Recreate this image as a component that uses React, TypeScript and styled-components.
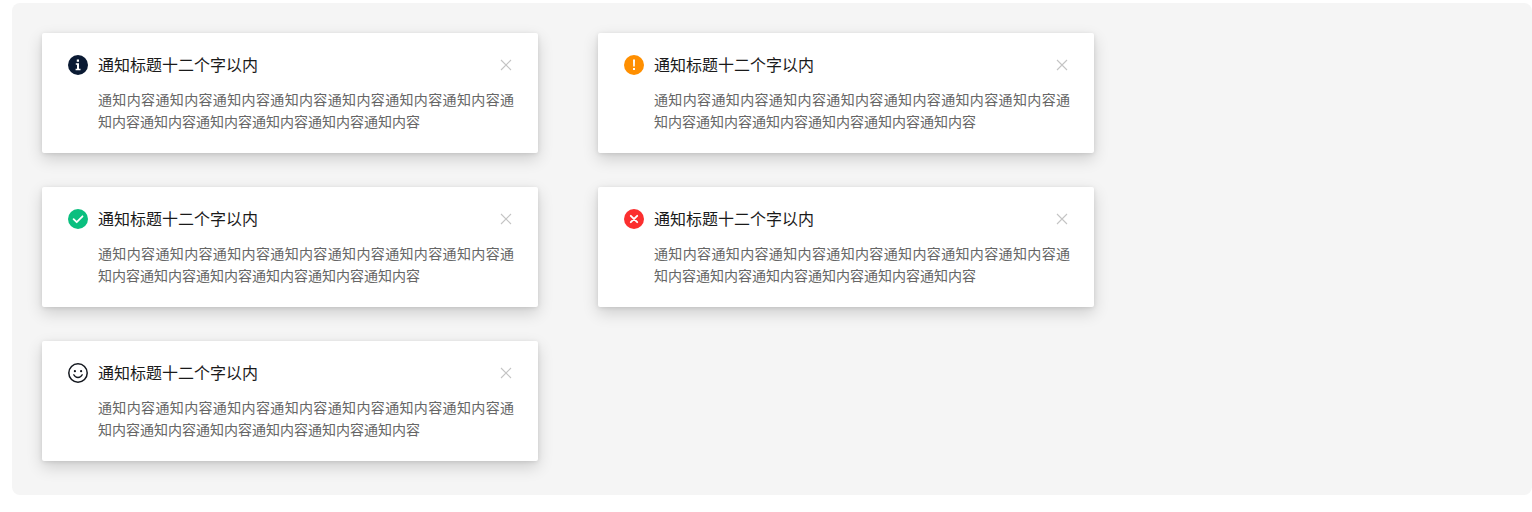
import React from "react";
import styled, { createGlobalStyle } from "styled-components";

const Global = createGlobalStyle`
  html, body { margin: 0; padding: 0; background: #fff; }
  body { font-family: "Noto Sans CJK SC", "Liberation Sans", sans-serif; }
`;

const Page = styled.div`
  padding: 3px 0 17px 12px;
  width: 1532px;
  height: 512px;
  box-sizing: border-box;
`;

const Panel = styled.div`
  height: 492px;
  box-sizing: border-box;
  background: #f5f5f5;
  border-radius: 8px;
  padding: 30px;
  display: grid;
  grid-template-columns: 496px 496px;
  grid-auto-rows: 120px;
  column-gap: 60px;
  row-gap: 34px;
`;

const Card = styled.div`
  background: #fff;
  border-radius: 2px;
  box-shadow: 0 6px 16px rgba(0, 0, 0, 0.16), 0 1px 4px rgba(0, 0, 0, 0.1);
  padding: 21px 24px 0 26px;
  box-sizing: border-box;
  display: grid;
  grid-template-columns: 20px 1fr 12px;
  column-gap: 10px;
  grid-template-rows: 22px auto;
  row-gap: 12px;
  align-items: center;
  align-content: start;
`;

const IconSlot = styled.svg`
  display: block;
  width: 20px;
  height: 20px;
`;

const Title = styled.div`
  font-size: 16px;
  line-height: 22px;
  padding-bottom: 2px;
  color: #1a1a1a;
  white-space: nowrap;
`;

const Close = styled.svg`
  display: block;
  width: 12px;
  height: 12px;
  justify-self: end;
  margin-right: 2px;
`;

const Body = styled.div`
  grid-column: 2 / 4;
  font-size: 14px;
  line-height: 22px;
  color: #666;
  width: 416px;
  text-align: justify;
`;

const Info = () => (
  <IconSlot viewBox="0 0 20 20">
    <circle cx="10" cy="10" r="10" fill="#0a1a33" />
    <path
      d="M8.8 4.6h2.2v2.2H8.8zM7.8 8.2h3.2v5.6h1.5v1.5H7.6v-1.5h1.4V9.7H7.8z"
      fill="#fff"
    />
  </IconSlot>
);

const Warn = () => (
  <IconSlot viewBox="0 0 20 20">
    <circle cx="10" cy="10" r="10" fill="#ff8f00" />
    <path d="M9 4.6h2l-.2 7H9.2zM9 13h2v2H9z" fill="#fff" />
  </IconSlot>
);

const Ok = () => (
  <IconSlot viewBox="0 0 20 20">
    <circle cx="10" cy="10" r="10" fill="#0abf7f" />
    <path
      d="M5.6 10.2l3.1 3 5.8-5.9"
      fill="none"
      stroke="#fff"
      strokeWidth="1.8"
      strokeLinecap="round"
      strokeLinejoin="round"
    />
  </IconSlot>
);

const Err = () => (
  <IconSlot viewBox="0 0 20 20">
    <circle cx="10" cy="10" r="10" fill="#fb2f2f" />
    <path
      d="M6.8 6.8l6.4 6.4M13.2 6.8l-6.4 6.4"
      fill="none"
      stroke="#fff"
      strokeWidth="1.9"
      strokeLinecap="round"
    />
  </IconSlot>
);

const Smile = () => (
  <IconSlot viewBox="0 0 20 20">
    <circle cx="10" cy="10" r="9.2" fill="#fff" stroke="#14181f" strokeWidth="1.5" />
    <circle cx="6.9" cy="8.2" r="1.1" fill="#14181f" />
    <circle cx="13.1" cy="8.2" r="1.1" fill="#14181f" />
    <path
      d="M5.8 11.8c.9 1.8 2.4 2.7 4.2 2.7s3.3-.9 4.2-2.7"
      fill="none"
      stroke="#14181f"
      strokeWidth="1.4"
      strokeLinecap="round"
    />
  </IconSlot>
);

const CloseIcon = () => (
  <Close viewBox="0 0 12 12">
    <path d="M1 1l10 10M11 1L1 11" fill="none" stroke="#c4c4c4" strokeWidth="1.1" />
  </Close>
);

const TITLE = "通知标题十二个字以内";
const BODY = "通知内容".repeat(13);

const items = [Info, Warn, Ok, Err, Smile];

export default function App() {
  return (
    <Page>
      <Global />
      <Panel>
        {items.map((Icon, i) => (
          <Card key={i}>
            <Icon />
            <Title>{TITLE}</Title>
            <CloseIcon />
            <Body>{BODY}</Body>
          </Card>
        ))}
      </Panel>
    </Page>
  );
}
